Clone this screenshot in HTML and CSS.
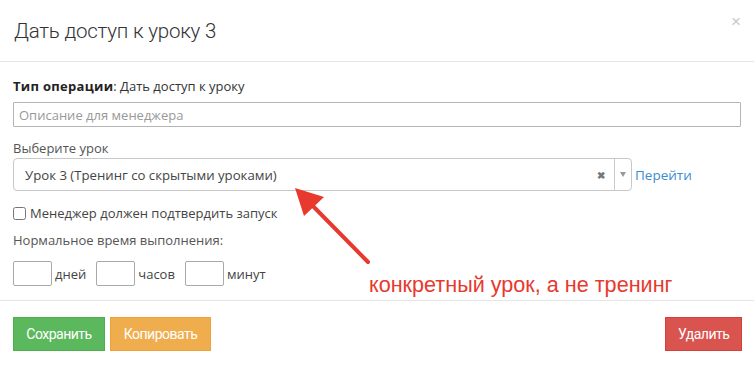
FILE: index.html
```html
<!DOCTYPE html>
<html lang="ru">
<head>
<meta charset="utf-8">
<title>Дать доступ к уроку 3</title>
<link rel="stylesheet" href="styles.css">
</head>
<body>
<div class="modal">
  <div class="modal-header">
    <h4 class="modal-title">Дать доступ к уроку 3</h4>
    <span class="close">×</span>
  </div>
  <div class="modal-body">
    <div class="line"><b>Тип операции</b>: Дать доступ к уроку</div>
    <input class="text-input" type="text" placeholder="Описание для менеджера">
    <div class="line label">Выберите урок</div>
    <div class="select-row">
      <div class="select">
        <span class="select-value">Урок 3 (Тренинг со скрытыми уроками)</span>
        <span class="select-clear">✖</span>
        <span class="select-arrow"><span class="tri"></span></span>
      </div>
      <a class="go-link">Перейти</a>
    </div>
    <label class="line check-row"><input type="checkbox" class="check"> Менеджер должен подтвердить запуск</label>
    <div class="line label time-label">Нормальное время выполнения:</div>
    <div class="time-row">
      <input class="small-input" type="text"><span class="unit">дней</span>
      <input class="small-input" type="text"><span class="unit">часов</span>
      <input class="small-input" type="text"><span class="unit">минут</span>
    </div>
  </div>
  <div class="modal-footer">
    <div class="left-buttons">
      <button class="btn btn-success">Сохранить</button>
      <button class="btn btn-warning">Копировать</button>
    </div>
    <button class="btn btn-danger">Удалить</button>
  </div>

  <svg class="annot-arrow" width="754" height="365" viewBox="0 0 754 365">
    <line x1="368" y1="262" x2="306" y2="199" stroke="#e8392e" stroke-width="4" stroke-linecap="round"/>
    <polygon points="295,188 324,197 304,216" fill="#e8392e"/>
  </svg>
  <div class="annot-text">конкретный урок, а не тренинг</div>
</div>
</body>
</html>
```

FILE: styles.css
```css
* { box-sizing: border-box; }
html, body { margin: 0; padding: 0; background: #fff; }
body {
  width: 754px;
  height: 365px;
  overflow: hidden;
  font-family: "Open Sans", "Noto Sans", sans-serif;
  font-size: 13px;
  color: #333;
}
.modal { position: relative; width: 754px; height: 365px; }
.modal-header {
  height: 62px;
  border-bottom: 1px solid #e5e5e5;
  display: flex;
  justify-content: space-between;
  align-items: center;
  padding: 0 13px 0 14px;
}
.modal-title {
  margin: 0;
  font-family: Roboto, sans-serif;
  font-weight: 300;
  font-size: 20.5px;
  letter-spacing: -0.2px;
  color: #333;
}
.close {
  align-self: flex-start;
  margin-top: 12px;
  font-family: "Liberation Sans", sans-serif;
  font-size: 17px;
  color: #c8c8c8;
}
.modal-body {
  padding: 15px 13px 14px 13px;
  display: flex;
  flex-direction: column;
  align-items: flex-start;
}
.line { line-height: 18px; height: 18px; }
.line b { font-weight: 700; color: #222; letter-spacing: 0.3px; }
.label { color: #555; }
.text-input {
  margin-top: 7px;
  width: 728px;
  height: 25px;
  border: 1px solid #b5b5b5;
  border-radius: 1px;
  padding: 0 5px;
  font-family: inherit;
  font-size: 13px;
  color: #333;
}
.text-input::placeholder { color: #999; }
.modal-body > .label:nth-of-type(2) { margin-top: 12px; }
.select-row { margin-top: 1px; display: flex; align-items: center; }
.select {
  width: 619px;
  height: 33px;
  border: 1px solid #c8c8c8;
  border-radius: 4px;
  display: flex;
  align-items: center;
}
.select-value {
  flex: 1;
  padding-left: 11px;
  color: #444;
  font-size: 13.2px;
}
.select-clear {
  font-size: 10px;
  color: #777;
  font-weight: bold;
  margin-right: 9px;
}
.select-arrow {
  width: 17px;
  height: 100%;
  border-left: 1px solid #ccc;
  display: flex;
  align-items: center;
  justify-content: center;
}
.tri {
  width: 0; height: 0;
  border-left: 3.5px solid transparent;
  border-right: 3.5px solid transparent;
  border-top: 5px solid #999;
}
.go-link {
  margin-left: 3px;
  color: #3d8bd0;
  font-size: 13.5px;
  cursor: pointer;
}
.check-row {
  margin-top: 13px;
  display: flex;
  align-items: center;
  color: #444;
}
.check {
  margin: 0 4px 0 0;
  width: 13px;
  height: 13px;
}
.time-label { margin-top: 9px; }
.time-row { margin-top: 12px; display: flex; align-items: center; }
.small-input {
  width: 39px;
  height: 25px;
  border: 1px solid #a9a9a9;
  border-radius: 2px;
  padding: 0 3px;
  margin: 0;
}
.unit { margin: 0 10px 0 3px; color: #444; }
.modal-footer {
  border-top: 1px solid #e5e5e5;
  padding: 16px 12px 0 13px;
  display: flex;
  justify-content: space-between;
  align-items: flex-start;
}
.left-buttons { display: flex; gap: 5px; }
.btn {
  height: 34px;
  padding: 0 12px;
  border: 1px solid transparent;
  border-radius: 0;
  font-family: Roboto, sans-serif;
  font-size: 14px;
  letter-spacing: -0.5px;
  color: #fff;
  cursor: pointer;
}
.btn-success { background: #5cb85c; border-color: #4cae4c; width: 92px; }
.btn-warning { background: #f0ad4e; border-color: #eea236; width: 101px; }
.btn-danger { background: #d9534f; border-color: #d43f3a; width: 77px; }
.annot-arrow { position: absolute; left: 0; top: 0; pointer-events: none; }
.annot-text {
  position: absolute;
  left: 369px;
  top: 272px;
  font-family: "Liberation Sans", Arial, sans-serif;
  font-size: 21.6px;
  color: #e8392e;
  white-space: nowrap;
}
```
